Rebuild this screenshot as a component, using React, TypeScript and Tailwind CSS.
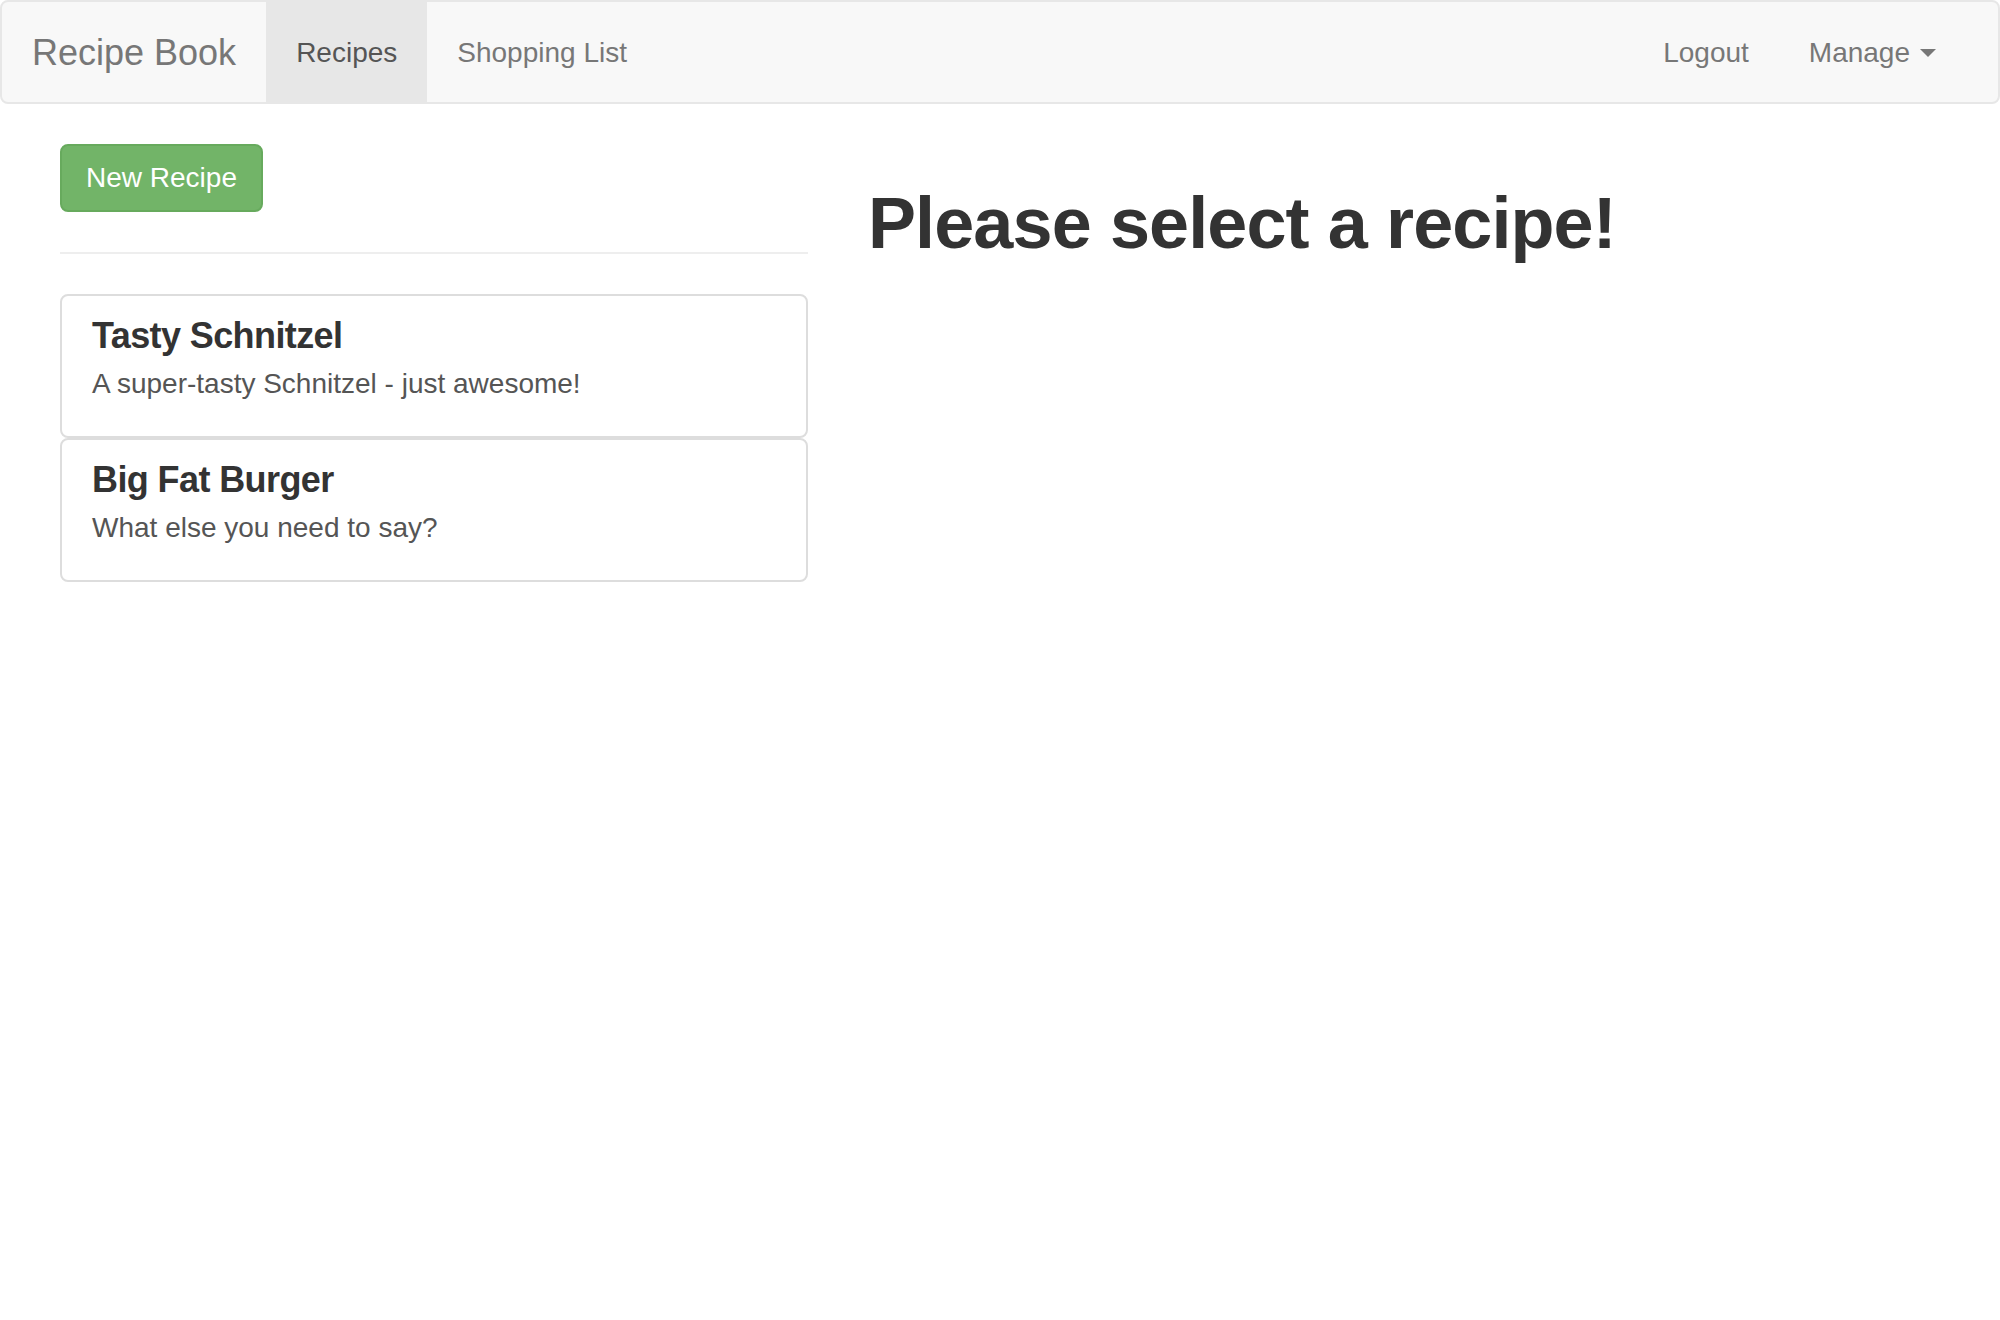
import React from 'react';

const recipes = [
  { name: 'Tasty Schnitzel', description: 'A super-tasty Schnitzel - just awesome!' },
  { name: 'Big Fat Burger', description: 'What else you need to say?' },
];

const Header: React.FC = () => (
  <nav className="h-[104px] border-2 border-[#e7e7e7] bg-[#f8f8f8] rounded-[8px] flex justify-between">
    <div className="flex">
      <a className="px-[30px] h-[100px] pt-[2px] flex items-center text-[36px] leading-[40px] text-[#777]">
        Recipe Book
      </a>
      <a className="px-[30px] h-[100px] pt-[2px] flex items-center text-[28px] leading-[40px] text-[#555] bg-[#e7e7e7]">
        Recipes
      </a>
      <a className="px-[30px] h-[100px] pt-[2px] flex items-center text-[28px] leading-[40px] text-[#777]">
        Shopping List
      </a>
    </div>
    <div className="flex pr-[32px]">
      <a className="px-[30px] h-[100px] pt-[2px] flex items-center text-[28px] leading-[40px] text-[#777]">
        Logout
      </a>
      <a className="px-[30px] h-[100px] pt-[2px] flex items-center text-[28px] leading-[40px] text-[#777]">
        Manage
        <span className="ml-[10px] w-0 h-0 border-l-[8px] border-r-[8px] border-t-[8px] border-l-transparent border-r-transparent border-t-[#777]" />
      </a>
    </div>
  </nav>
);

export default function App() {
  return (
    <div className="min-h-screen bg-white text-[#333]" style={{ fontFamily: '"Liberation Sans", Arial, sans-serif' }}>
      <Header />
      <div className="flex gap-[60px] px-[60px] mt-[40px]">
        {/* recipe list */}
        <div className="w-[748px] shrink-0">
          <button className="h-[68px] px-[24px] text-[28px] leading-[40px] text-white bg-[#72b468] border-2 border-[#67aa5d] rounded-[8px]">
            New Recipe
          </button>
          <hr className="my-[40px] border-0 border-t-2 border-[#eee]" />
          <div>
            {recipes.map((r) => (
              <a
                key={r.name}
                className="block border-2 border-[#ddd] rounded-[8px] px-[30px] pt-[20px] pb-[34px] bg-white"
              >
                <h4 className="text-[36px] leading-[39.6px] font-bold tracking-[-0.6px] text-[#333] mb-[10px]">{r.name}</h4>
                <p className="text-[28px] leading-[36.4px] text-[#555]">{r.description}</p>
              </a>
            ))}
          </div>
        </div>

        {/* detail */}
        <div className="flex-1">
          <h1 className="mt-[40px] text-[72px] leading-[79.2px] font-bold tracking-[-0.9px] text-[#333]">Please select a recipe!</h1>
        </div>
      </div>
    </div>
  );
}
